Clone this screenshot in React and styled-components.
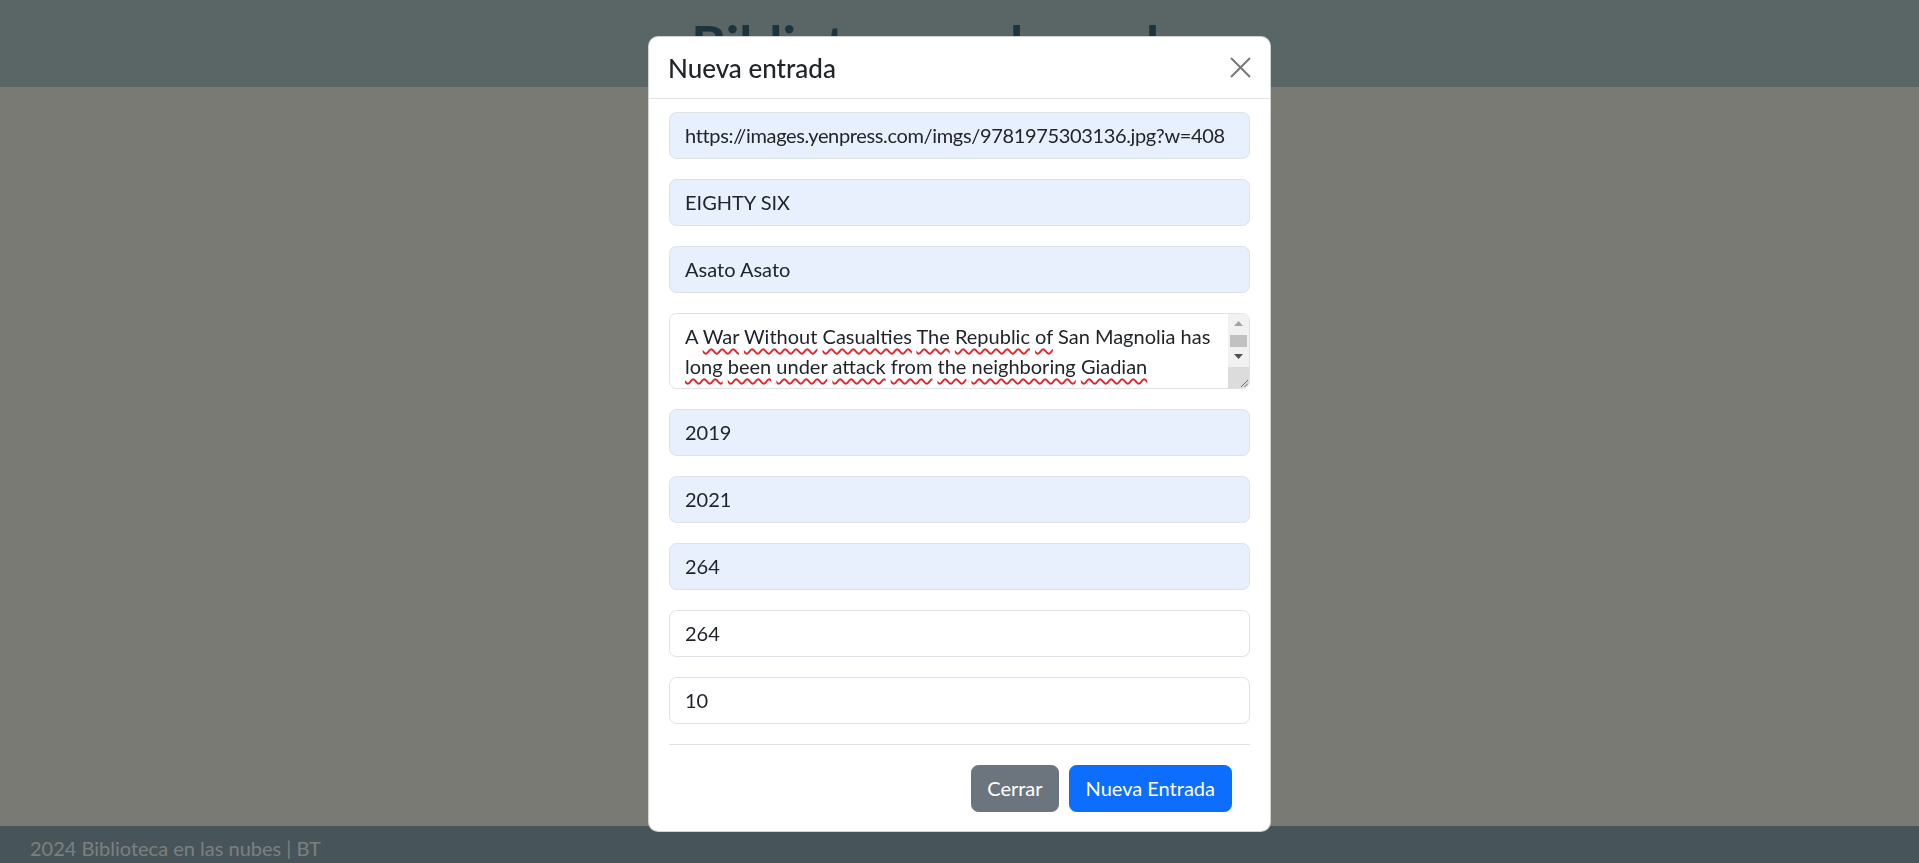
import React from "react";
import styled, { createGlobalStyle } from "styled-components";

const GlobalStyle = createGlobalStyle`
  html, body { margin: 0; padding: 0; }
  body {
    font-family: Lato, "Open Sans", sans-serif;
    color: #212529;
    overflow: hidden;
  }
  * { box-sizing: border-box; }
`;

const Page = styled.div`
  height: 100vh;
  display: flex;
  flex-direction: column;
`;

const Navbar = styled.header`
  height: 87px;
  background: #b4cacc;
  padding-top: 13px;
  display: flex;
  justify-content: center;
`;

const SiteTitle = styled.h1`
  margin: 0;
  font-size: 53px;
  line-height: 1.2;
  font-weight: 700;
  color: #36687a;
`;

const Main = styled.main`
  flex: 1;
  background: #f5f5e9;
`;

const Footer = styled.footer`
  height: 37px;
  background: #8ea8b2;
  padding: 7px 30px 0;
  font-size: 20px;
  line-height: 30px;
  color: #f6ffff;
  overflow: hidden;
`;

const Backdrop = styled.div`
  position: fixed;
  inset: 0;
  background: rgba(0, 0, 0, 0.5);
  display: flex;
  justify-content: center;
  align-items: flex-start;
  padding-top: 36px;
`;

const Modal = styled.div`
  width: 623px;
  background: #fff;
  border: 1px solid rgba(0, 0, 0, 0.175);
  border-radius: 10px;
  font-size: 20px;
  line-height: 30px;
`;

const ModalHeader = styled.div`
  height: 62px;
  border-bottom: 1px solid #dee2e6;
  display: flex;
  align-items: center;
  justify-content: space-between;
  padding: 0 19px 0 19px;
`;

const ModalTitle = styled.h5`
  margin: 0;
  font-size: 26px;
  font-weight: 500;
  line-height: 30px;
  color: #212529;
`;

const CloseButton = styled.button`
  width: 21px;
  height: 21px;
  padding: 0;
  border: 0;
  background: transparent;
  color: #787878;
  display: flex;
  align-items: center;
  justify-content: center;
  cursor: pointer;
`;

const ModalBody = styled.form`
  padding: 12.5px 20px 0;
  display: flex;
  flex-direction: column;
  gap: 20px;
`;

const Input = styled.input`
  display: block;
  width: 100%;
  height: 47px;
  padding: 0 15px;
  font-family: inherit;
  font-size: 20px;
  letter-spacing: ${(p) => (p.$tight ? "-0.35px" : "normal")};
  color: #212529;
  background: ${(p) => (p.$autofill ? "#e8f0fe" : "#fff")};
  border: 1px solid #dee2e6;
  border-radius: 7.5px;
  outline: none;
`;

const TextArea = styled.div`
  height: 76px;
  border: 1px solid #dee2e6;
  border-radius: 7.5px;
  background: #fff;
  display: flex;
  overflow: hidden;
`;

const TextContent = styled.div`
  flex: 1;
  padding: 7.5px 15px;
  overflow: hidden;
  color: #212529;
`;

const TextLine = styled.div`
  white-space: nowrap;
  line-height: 30px;
`;

const Misspelled = styled.span`
  text-decoration: underline wavy #e0242b;
  text-decoration-thickness: 1.5px;
  text-underline-offset: 4px;
  text-decoration-skip-ink: none;
`;

const ScrollBar = styled.div`
  width: 21px;
  background: #f1f1f1;
  display: flex;
  flex-direction: column;
`;

const ScrollArrow = styled.div`
  height: ${(p) => p.$h}px;
  display: flex;
  align-items: center;
  justify-content: center;
`;

const ScrollThumb = styled.div`
  height: 12px;
  margin: 1px 2px;
  background: #c1c1c1;
`;

const ScrollFill = styled.div`
  flex: 1;
`;

const ResizeCorner = styled.div`
  height: 21px;
  background: #dcdcdc;
  display: flex;
  align-items: flex-end;
  justify-content: flex-end;
`;

const ModalFooter = styled.div`
  border-top: 1px solid #dee2e6;
  padding: 20px 18px 19px;
  display: flex;
  justify-content: flex-end;
  gap: 10px;
`;

const Button = styled.button`
  height: 47px;
  padding: 0 ${(p) => (p.$variant === "primary" ? 16 : 15)}px;
  font-family: inherit;
  font-size: 20px;
  line-height: 30px;
  color: #fff;
  border: 1px solid ${(p) => (p.$variant === "primary" ? "#0d6efd" : "#6c757d")};
  background: ${(p) => (p.$variant === "primary" ? "#0d6efd" : "#6c757d")};
  border-radius: 7.5px;
  cursor: pointer;
`;

const bad = (w) => <Misspelled>{w}</Misspelled>;

export default function App() {
  return (
    <>
      <GlobalStyle />
      <Page>
        <Navbar>
          <SiteTitle>Biblioteca en las nubes</SiteTitle>
        </Navbar>
        <Main />
        <Footer>2024 Biblioteca en las nubes | BT</Footer>
      </Page>
      <Backdrop>
        <Modal>
          <ModalHeader>
            <ModalTitle>Nueva entrada</ModalTitle>
            <CloseButton aria-label="Close">
              <svg width="21" height="21" viewBox="0 0 21 21">
                <path d="M1 1L20 20M20 1L1 20" stroke="currentColor" strokeWidth="2" fill="none" />
              </svg>
            </CloseButton>
          </ModalHeader>
          <ModalBody>
            <Input $autofill $tight readOnly value="https://images.yenpress.com/imgs/9781975303136.jpg?w=408" />
            <Input $autofill readOnly value="EIGHTY SIX" />
            <Input $autofill readOnly value="Asato Asato" />
            <TextArea>
              <TextContent>
                <TextLine>
                  A {bad("War")} {bad("Without")} {bad("Casualties")} {bad("The")} {bad("Republic")} {bad("of")} San Magnolia has
                </TextLine>
                <TextLine>
                  {bad("long")} {bad("been")} {bad("under")} {bad("attack")} {bad("from")} {bad("the")} {bad("neighboring")} {bad("Giadian")}
                </TextLine>
                <TextLine>Empire's army of unmanned drones, the Legion.</TextLine>
              </TextContent>
              <ScrollBar>
                <ScrollArrow $h={20}>
                  <svg width="9" height="5" viewBox="0 0 9 5">
                    <path d="M4.5 0L9 5H0Z" fill="#a3a3a3" />
                  </svg>
                </ScrollArrow>
                <ScrollThumb />
                <ScrollArrow $h={18}>
                  <svg width="9" height="5" viewBox="0 0 9 5">
                    <path d="M0 0H9L4.5 5Z" fill="#505050" />
                  </svg>
                </ScrollArrow>
                <ScrollFill />
                <ResizeCorner>
                  <svg width="10" height="10" viewBox="0 0 10 10">
                    <path d="M9 2L2 9M9 5.5L5.5 9" stroke="#6a6a6a" strokeWidth="1" fill="none" />
                  </svg>
                </ResizeCorner>
              </ScrollBar>
            </TextArea>
            <Input $autofill readOnly value="2019" />
            <Input $autofill readOnly value="2021" />
            <Input $autofill readOnly value="264" />
            <Input readOnly value="264" />
            <Input readOnly value="10" />
            <ModalFooter>
              <Button type="button">Cerrar</Button>
              <Button type="button" $variant="primary">Nueva Entrada</Button>
            </ModalFooter>
          </ModalBody>
        </Modal>
      </Backdrop>
    </>
  );
}
